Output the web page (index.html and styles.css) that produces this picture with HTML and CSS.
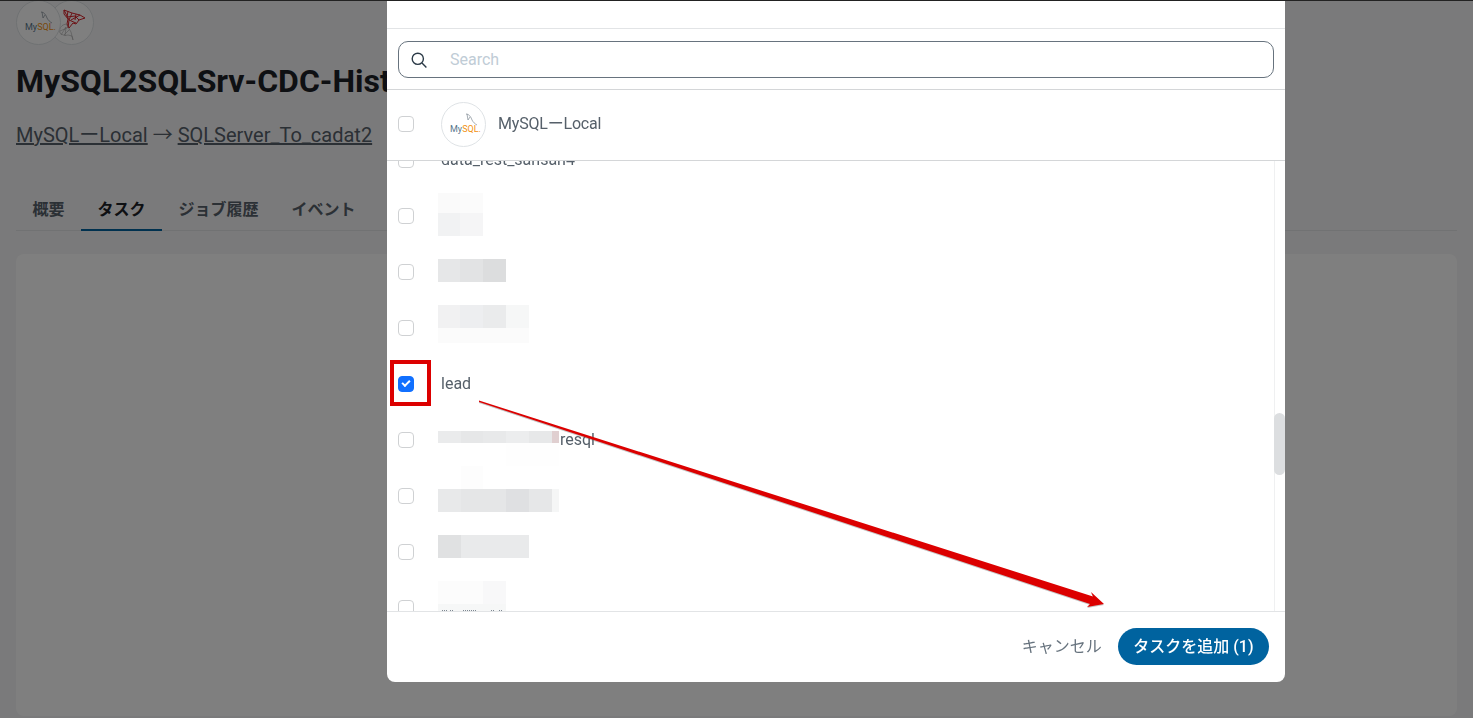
FILE: index.html
```html
<!DOCTYPE html>
<html lang="ja">
<head>
  <meta charset="UTF-8" />
  <meta name="viewport" content="width=device-width, initial-scale=1" />
  <title>MySQL2SQLSrv-CDC-History</title>
  <link rel="stylesheet" href="styles.css">
</head>
<body>
  <div class="page">
    <div class="logos">
      <span class="logo">
        <svg viewBox="0 0 45 45" width="45" height="45">
          <path class="dolphin" d="M25 12c3 0 5 3 6 6 1 2 3 4 5 5M26 12l1 6M29 15l-2 3" />
          <text class="mysql" x="9" y="30">My<tspan class="sql">SQL.</tspan></text>
        </svg>
      </span>
      <span class="logo logo-second">
        <svg viewBox="0 0 45 45" width="45" height="45">
          <path class="ss-red" d="M15 10l8 3 8 2 5 3-6 2-3 4-3-1-4 5-2-4 1-5-4-5zM15 10l5 10 7 3M19 11l-1 6 8-1 4 4M23 13l-3 7M27 14l-1 6M31 15l-9 5M20 20l-1 8" />
          <path class="ss-grey" d="M14 25c-3 2-4 5-3 8 2 2 5 3 8 2l4 1 1 4-2-8-3-5-2-3zM11 31l7-3M12 35l5-8M16 36l1-9M20 30l-5 5" />
        </svg>
      </span>
    </div>
    <h1 class="title">MySQL2SQLSrv-CDC-History</h1>
    <div class="route">
      <a href="#">MySQLーLocal</a> → <a href="#">SQLServer_To_cadat2</a>
    </div>
    <div class="tabs">
      <div class="tab">概要</div>
      <div class="tab active">タスク</div>
      <div class="tab">ジョブ履歴</div>
      <div class="tab">イベント</div>
    </div>
    <div class="card"></div>
  </div>

  <div class="overlay">
    <div class="modal">
      <div class="modal-top"></div>
      <div class="search-wrap">
        <div class="search">
          <svg class="search-icon" viewBox="0 0 16 16" width="16" height="16">
            <circle cx="6.8" cy="6.8" r="5.6" />
            <path d="M11 11l4.4 4.4" />
          </svg>
          <input type="text" placeholder="Search" />
        </div>
      </div>
      <div class="source">
        <span class="check"></span>
        <span class="logo">
          <svg viewBox="0 0 45 45" width="45" height="45">
            <path class="dolphin" d="M25 12c3 0 5 3 6 6 1 2 3 4 5 5M26 12l1 6M29 15l-2 3" />
            <text class="mysql" x="9" y="30">My<tspan class="sql">SQL.</tspan></text>
          </svg>
        </span>
        <span class="source-name">MySQLーLocal</span>
      </div>
      <div class="list">
        <div class="rows">
          <div class="row"><span class="check"></span><span class="row-text">data_rest_sansan4</span></div>
          <div class="row"><span class="check"></span></div>
          <div class="row"><span class="check"></span></div>
          <div class="row"><span class="check"></span></div>
          <div class="row"><span class="check on"></span><span class="row-text">lead</span></div>
          <div class="row"><span class="check"></span><span class="row-text resql">resql</span></div>
          <div class="row"><span class="check"></span></div>
          <div class="row"><span class="check"></span></div>
          <div class="row"><span class="check"></span></div>
        </div>
        <div class="scroll-track"><div class="scroll-thumb"></div></div>
      </div>
      <div class="modal-foot">
        <span class="cancel">キャンセル</span>
        <button class="add">タスクを追加 (1)</button>
      </div>
    </div>
  </div>

  <!-- screenshot markup: mosaics over hidden names, red box and arrow -->
  <svg class="marks" viewBox="0 0 1473 718" width="1473" height="718">
    <rect x="438" y="193" width="22" height="20" fill="#fafafa" />
    <rect x="460" y="193" width="23" height="20" fill="#fbfbfb" />
    <rect x="438" y="213" width="22" height="23" fill="#f1f2f3" />
    <rect x="460" y="213" width="23" height="23" fill="#f5f5f6" />

    <rect x="438" y="259" width="22" height="23" fill="#e6e7e8" />
    <rect x="460" y="259" width="23" height="23" fill="#e2e3e4" />
    <rect x="483" y="259" width="23" height="23" fill="#dcddde" />

    <rect x="438" y="305" width="22" height="23" fill="#f1f1f2" />
    <rect x="460" y="305" width="23" height="23" fill="#edeef0" />
    <rect x="483" y="305" width="23" height="23" fill="#eaebec" />
    <rect x="506" y="305" width="23" height="23" fill="#f6f7f7" />
    <rect x="438" y="328" width="91" height="15" fill="#fbfbfb" />

    <rect x="438" y="431" width="23" height="12" fill="#eaebec" />
    <rect x="461" y="431" width="22" height="12" fill="#e6e7e8" />
    <rect x="483" y="431" width="23" height="12" fill="#e8e9ea" />
    <rect x="506" y="431" width="23" height="12" fill="#ecedee" />
    <rect x="529" y="431" width="23" height="12" fill="#e7e8e9" />
    <rect x="552" y="431" width="7" height="12" fill="#e0cfd0" />
    <rect x="506" y="443" width="53" height="23" fill="#fefefe" />
    <rect x="461" y="466" width="22" height="23" fill="#fdfdfd" />

    <rect x="438" y="489" width="23" height="23" fill="#e8e9ea" />
    <rect x="461" y="489" width="45" height="23" fill="#e5e6e7" />
    <rect x="506" y="489" width="23" height="23" fill="#dfe0e2" />
    <rect x="529" y="489" width="23" height="23" fill="#e6e7e8" />
    <rect x="552" y="489" width="7" height="23" fill="#f5f6f6" />

    <rect x="438" y="535" width="23" height="23" fill="#e0e1e2" />
    <rect x="461" y="535" width="68" height="23" fill="#e9eaeb" />

    <rect x="438" y="581" width="45" height="23" fill="#fcfcfc" />
    <rect x="483" y="581" width="23" height="23" fill="#f8f8f9" />
    <rect x="438" y="604" width="68" height="7" fill="#f6f7f7" />
    <path class="stub" d="M442 610.5h5M450 610.5h3M463 610.5h13M491 610.5h3M499 610.5h4" />

    <rect class="red-box" x="392" y="362" width="37" height="42" />
    <polygon class="arrow-shadow" points="479,401.5 1093,597.5 1091,593 1104,605 1087,608 1090,605 479,403" />
    <polygon class="arrow" points="479,400.5 1093,596.5 1091,592 1104,604 1087,607 1090,604 479,402" />
  </svg>
</body>
</html>
```

FILE: styles.css
```css
* {
  box-sizing: border-box;
}
html,
body {
  height: 718px;
}
body {
  margin: 0;
  overflow: hidden;
  background: #f4f5f6;
  border-top: 1px solid #222;
  color: #56606a;
  font-family: Roboto, "Noto Sans CJK JP", sans-serif;
}
.page {
  display: flex;
  flex-direction: column;
  height: 717px;
  padding: 0 16px 2px;
}
.logos {
  display: flex;
  height: 44px;
  margin-top: -1px;
}
.logo {
  display: block;
  flex: none;
  width: 45px;
  height: 45px;
  border: 1px solid #dfe3e6;
  border-radius: 50%;
  background: #fff;
  overflow: hidden;
}
.logo svg {
  display: block;
  margin: -1px;
}
.logo-second {
  margin-left: -12px;
  position: relative;
  z-index: -1;
}
.dolphin {
  fill: none;
  stroke: #7f8a94;
  stroke-width: 0.7;
}
.mysql {
  font-size: 9px;
  fill: #56768c;
}
.sql {
  fill: #f29111;
}
.ss-red {
  fill: none;
  stroke: #d8232a;
  stroke-width: 1;
}
.ss-grey {
  fill: none;
  stroke: #9a9a9a;
  stroke-width: 0.5;
}
.title {
  margin: 19px 0 0;
  font-size: 32px;
  line-height: 36px;
  font-weight: 700;
  color: #1c2127;
  white-space: nowrap;
}
.route {
  margin-top: 22px;
  font-size: 20px;
  line-height: 28px;
  white-space: nowrap;
}
.route a {
  color: inherit;
}
.tabs {
  display: flex;
  height: 43px;
  margin-top: 39px;
  border-bottom: 1px solid #e2e4e6;
}
.tab {
  padding: 11px 16.5px 0;
  font-size: 16px;
  line-height: 22px;
  font-weight: 700;
  color: #56606a;
}
.tab.active {
  color: #1c2127;
  height: 43px;
  border-bottom: 2px solid #00639f;
}
.card {
  flex: 1;
  margin-top: 23px;
  background: #fff;
  border-radius: 8px;
}
.overlay {
  position: fixed;
  top: 1px;
  left: 0;
  right: 0;
  bottom: 0;
  padding-left: 387px;
  background: rgba(0, 0, 0, 0.5);
}
.modal {
  display: flex;
  flex-direction: column;
  width: 898px;
  height: 681px;
  background: #fff;
  border-radius: 0 0 8px 8px;
  overflow: hidden;
}
.modal-top {
  height: 28px;
  border-bottom: 1px solid #e2e4e6;
}
.search-wrap {
  height: 61px;
  padding: 12px 11px 0;
  border-bottom: 1px solid #d4d6d8;
}
.search {
  display: flex;
  align-items: center;
  gap: 23px;
  height: 37px;
  padding: 0 12px;
  border: 1px solid #67737e;
  border-radius: 10px;
}
.search-icon {
  flex: none;
  fill: none;
  stroke: #2b3a47;
  stroke-width: 1.4;
}
.search input {
  flex: 1;
  border: none;
  outline: none;
  padding: 0;
  font: 16px Roboto, sans-serif;
  color: #56606a;
}
.search input::placeholder {
  color: #c0ccd6;
  opacity: 1;
}
.source {
  display: flex;
  align-items: center;
  height: 71px;
  padding: 0 0 2px 11px;
  border-bottom: 1px solid #d4d6d8;
  background: #fff;
}
.check {
  position: relative;
  flex: none;
  width: 16px;
  height: 16px;
  margin-right: 27px;
  border: 1.5px solid #cfd1d3;
  border-radius: 4px;
  background: #fff;
}
.check.on {
  border-color: #1170ff;
  background: #1170ff;
}
.check.on::after {
  content: "";
  position: absolute;
  left: 3px;
  top: 3px;
  width: 6px;
  height: 3px;
  border-left: 2px solid #fff;
  border-bottom: 2px solid #fff;
  transform: rotate(-45deg);
}
.source-name {
  margin: 0 0 4px 12px;
  font-size: 16px;
  letter-spacing: -0.2px;
}
.list {
  position: relative;
  height: 450px;
  overflow: hidden;
}
.rows {
  margin-top: -29px;
}
.row {
  display: flex;
  align-items: center;
  height: 56px;
  padding-left: 11px;
  font-size: 16px;
}
.row-text {
  margin-bottom: 2px;
}
.resql {
  margin-left: 119px;
}
.scroll-track {
  position: absolute;
  top: 0;
  right: 0;
  bottom: 0;
  width: 11px;
  border-left: 1px solid #eff0f1;
}
.scroll-thumb {
  height: 62px;
  margin: 252px 0 0 -1px;
  border-radius: 6px;
  background: #dcdee0;
}
.modal-foot {
  display: flex;
  justify-content: flex-end;
  align-items: center;
  gap: 16px;
  height: 71px;
  padding: 0 16px 2px 0;
  border-top: 1px solid #e2e4e6;
}
.cancel {
  margin-bottom: 2px;
  font-size: 16px;
  color: #67737e;
}
.add {
  height: 37px;
  padding: 0 15.5px 2px;
  border: none;
  border-radius: 19px;
  background: #00639f;
  color: #fff;
  font: 500 16px Roboto, "Noto Sans CJK JP", sans-serif;
}
.marks {
  position: fixed;
  top: 0;
  left: 0;
  pointer-events: none;
}
.stub {
  fill: none;
  stroke: #7d8791;
  stroke-width: 1;
  stroke-dasharray: 1 1;
}
.red-box {
  fill: none;
  stroke: #dc0000;
  stroke-width: 4;
}
.arrow {
  fill: #dc0000;
}
.arrow-shadow {
  fill: #555;
  opacity: 0.35;
}
```
